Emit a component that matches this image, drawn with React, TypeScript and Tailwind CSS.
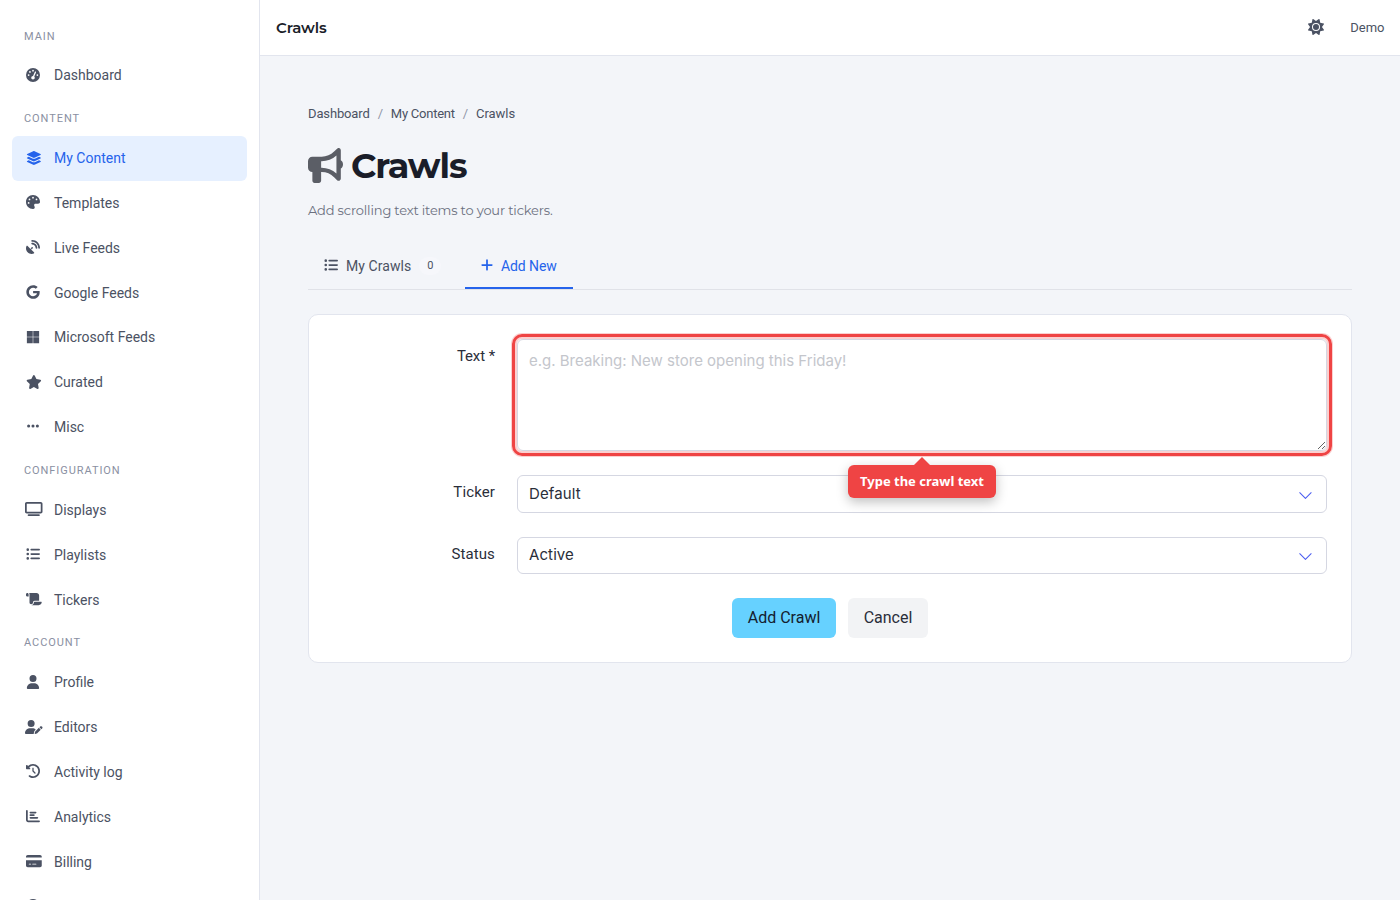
import React from "react";
import type { IconType } from "react-icons";
import {
  FaGaugeHigh,
  FaLayerGroup,
  FaPalette,
  FaSatelliteDish,
  FaGoogle,
  FaMicrosoft,
  FaStar,
  FaEllipsis,
  FaTv,
  FaListUl,
  FaScroll,
  FaUser,
  FaUserPen,
  FaClockRotateLeft,
  FaChartBar,
  FaCreditCard,
  FaCircleQuestion,
  FaBullhorn,
  FaPlus,
  FaSun,
} from "react-icons/fa6";

type Item = { label: string; icon: IconType; active?: boolean; size?: string };

const regular = "h-[14px] w-[14px]";
const wide = "ml-[1.5px] h-[14px] w-[15.75px]";
const extraWide = "ml-[1.5px] h-[14px] w-[17.5px]";

const sections: { title: string; heading: string; items: Item[] }[] = [
  { title: "MAIN", heading: "h-[38px] pt-[14px]", items: [{ label: "Dashboard", icon: FaGaugeHigh }] },
  {
    title: "CONTENT",
    heading: "h-[38px] pt-[13px]",
    items: [
      { label: "My Content", icon: FaLayerGroup, active: true, size: wide },
      { label: "Templates", icon: FaPalette },
      { label: "Live Feeds", icon: FaSatelliteDish },
      { label: "Google Feeds", icon: FaGoogle },
      { label: "Microsoft Feeds", icon: FaMicrosoft },
      { label: "Curated", icon: FaStar, size: wide },
      { label: "Misc", icon: FaEllipsis },
    ],
  },
  {
    title: "CONFIGURATION",
    heading: "h-[38.2px] pt-[13.4px]",
    items: [
      { label: "Displays", icon: FaTv, size: extraWide },
      { label: "Playlists", icon: FaListUl },
      { label: "Tickers", icon: FaScroll, size: wide },
    ],
  },
  {
    title: "ACCOUNT",
    heading: "h-[38px] pt-[13px]",
    items: [
      { label: "Profile", icon: FaUser },
      { label: "Editors", icon: FaUserPen, size: extraWide },
      { label: "Activity log", icon: FaClockRotateLeft },
      { label: "Analytics", icon: FaChartBar },
      { label: "Billing", icon: FaCreditCard, size: wide },
      { label: "", icon: FaCircleQuestion },
    ],
  },
];

function Sidebar() {
  return (
    <nav className="h-full w-[260px] shrink-0 overflow-hidden border-r border-[#e2e5ee] bg-white px-3 pt-[15px]">
      {sections.map((s) => (
        <div key={s.title}>
          <div className={`pl-3 text-[11px] leading-4 tracking-[0.93px] text-[#8a90a2] ${s.heading}`}>{s.title}</div>
          {s.items.map(({ label, icon: Icon, active, size }) => (
            <a
              key={label}
              className={
                active
                  ? "flex h-[44.8px] items-center rounded-md bg-[#e6f0ff] pl-3 text-[#2563eb]"
                  : "flex h-[44.8px] items-center pl-3 text-[#4b5263]"
              }
            >
              <span className="mr-3 flex w-[18px] shrink-0 justify-center pb-px">
                <Icon className={`shrink-0 ${size ?? regular}`} />
              </span>
              <span className="text-sm leading-5">{label}</span>
            </a>
          ))}
        </div>
      ))}
    </nav>
  );
}

function Select({ value, height, chevron }: { value: string; height: string; chevron: string }) {
  return (
    <div className={`flex w-[810px] shrink-0 items-center justify-between rounded-md border border-[#d5d7e2] bg-white pl-[11px] pr-[14px] ${height}`}>
      <span className="font-[Inter,sans-serif] text-[15px] tracking-[0.1px] text-[#2a2e3a]">{value}</span>
      <svg viewBox="0 0 16 16" className={`h-[14px] w-[14px] ${chevron}`} fill="none" stroke="#4a5cf0" strokeWidth="1.2" strokeLinecap="round" strokeLinejoin="round">
        <path d="m2 4.25 6.5 6.5 6.5-6.5" />
      </svg>
    </div>
  );
}

function Label({ children, className = "pt-[7px] tracking-[0.12px]" }: { children: React.ReactNode; className?: string }) {
  return <label className={`mr-[22px] w-[162px] shrink-0 text-right text-[15px] leading-5 text-[#2a2e3a] ${className}`}>{children}</label>;
}

export default function App() {
  return (
    <div className="flex h-[900px] w-[1400px] overflow-hidden bg-[#f3f5f9] font-[Roboto,sans-serif]">
      <Sidebar />
      <div className="flex min-w-0 flex-1 flex-col">
        <header className="flex h-14 items-center justify-between border-b border-[#e2e5ee] bg-white px-4">
          <span className="pt-px font-[Montserrat,Inter,sans-serif] text-[15px] font-semibold tracking-[-0.1px] text-[#1a1d29]">Crawls</span>
          <div className="flex items-center text-[#4b5263]">
            <FaSun className="mb-px mr-[26px] h-4 w-4" />
            <span className="-mr-[0.5px] text-[13px]">Demo</span>
          </div>
        </header>
        <main className="px-12 pt-[48px]">
          <div className="flex gap-2 text-[13px] leading-5 tracking-[-0.14px] text-[#4b5263]">
            <span className="tracking-[-0.14px]">Dashboard</span>
            <span className="text-[#9096a8]">/</span>
            <span className="tracking-[-0.24px]">My Content</span>
            <span className="text-[#9096a8]">/</span>
            <span className="tracking-[-0.05px]">Crawls</span>
          </div>
          <h1 className="mt-5 flex h-[44px] items-center font-[Montserrat,Inter,sans-serif] text-[35px] font-bold tracking-[-1.15px] text-[#1a1d29]">
            <FaBullhorn className="mb-[2px] mr-2 h-[35px] w-[35px] text-[#5b5e66]" />
            Crawls
          </h1>
          <p className="mt-[12px] font-[Montserrat,Inter,sans-serif] text-[13px] leading-5 tracking-[-0.17px] text-[#6b7080]">Add scrolling text items to your tickers.</p>
          <div className="mt-[22px] flex h-[48px] border-b border-[#e0e2e8] text-sm text-[#4b5263]">
            <div className="flex w-[157px] items-center px-4">
              <FaListUl className="mb-[2px] mr-2 h-[14px] w-[14px]" />
              <span className="tracking-[0.08px]">My Crawls</span>
              <span className="ml-2 flex h-[18px] w-[22px] items-center justify-center rounded-full bg-[#f6f7fb] text-[11px]">0</span>
            </div>
            <div className="flex w-[108px] items-center whitespace-nowrap border-b-2 border-[#2563eb] pl-[15px] text-[#2563eb]">
              <FaPlus className="mr-[7px] h-[14px] w-[14px] shrink-0" />
              <span className="pt-[2px] tracking-[-0.1px]">Add New</span>
            </div>
          </div>
          <section className="mt-6 h-[349px] w-[1044px] rounded-[10px] border border-[#e2e5ee] bg-white px-6 pt-[23px]">
            <div className="flex">
              <Label className="pt-2 tracking-[-0.1px]">Text *</Label>
              <div className="h-[114px] shrink-0 pt-px">
                <div className="relative h-[112px] w-[810px]">
                  <textarea
                    placeholder="e.g. Breaking: New store opening this Friday!"
                    className="block h-[112px] w-[810px] resize-y rounded-md border border-[#d5d7e2] bg-white px-[11px] pt-[10px] font-[Inter,sans-serif] text-[15px] leading-[22px] placeholder:text-[#c4c6cc]"
                  />
                  <div className="pointer-events-none absolute -inset-[5px] rounded-[10px] border-[3px] border-[#ef4444] shadow-[0_0_0_1px_rgba(239,68,68,0.25),inset_0_0_0_2px_rgba(239,68,68,0.25)]" />
                  <div className="absolute left-1/2 top-[126px] z-10 h-[33px] w-[148px] -translate-x-1/2 rounded-md bg-[#ef4444] text-center font-['Noto_Sans',sans-serif] text-[13px] font-bold leading-[33px] text-white shadow-[0_4px_12px_rgba(0,0,0,0.25)]">
                    <span className="absolute -top-2 left-[66px] h-0 w-0 border-x-8 border-b-8 border-x-transparent border-b-[#ef4444]" />
                    Type the crawl text
                  </div>
                </div>
              </div>
            </div>
            <div className="mt-[23px] flex">
              <Label>Ticker</Label>
              <Select value="Default" height="h-[38px]" chevron="mt-[3px]" />
            </div>
            <div className="mt-6 flex">
              <Label>Status</Label>
              <Select value="Active" height="h-[37px]" chevron="mt-[2px]" />
            </div>
            <div className="mt-6 flex justify-center gap-3 text-base">
              <button className="h-10 w-[104px] rounded-md bg-[#66d1ff] text-[#14202e]">Add Crawl</button>
              <button className="h-10 w-20 rounded-md bg-[#f2f3f5] text-[#2a2e3a]">Cancel</button>
            </div>
          </section>
        </main>
      </div>
    </div>
  );
}
